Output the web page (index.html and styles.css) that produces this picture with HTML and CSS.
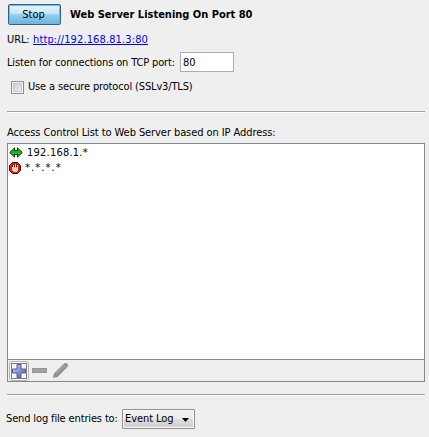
FILE: index.html
```html
<!DOCTYPE html>
<html lang="en">
<head>
<meta charset="utf-8">
<title>Web Server</title>
<link rel="stylesheet" href="styles.css">
</head>
<body>
<main class="panel">
  <header class="row header"><button class="stop">Stop</button><h1 class="title">Web Server Listening On Port 80</h1></header>
  <div class="row url"><span class="url-label">URL:</span><a class="link" href="#">http://192.168.81.3:80</a></div>
  <div class="row port"><label class="port-label" for="port">Listen for connections on TCP port:</label><input class="field" id="port" value="80"></div>
  <div class="row secure"><span class="check"></span><span class="secure-label">Use a secure protocol (SSLv3/TLS)</span></div>
  <hr class="rule">
  <div class="row acl-label"><span>Access Control List to Web Server based on IP Address:</span></div>
  <section class="list">
    <ul class="items">
      <li class="item"><svg class="icon" width="14" height="11" viewBox="0 0 14 11"><path d="M.7 5.500 5.500.9v2.600h3V.9L13.300 5.500 8.500 10.100V7.500h-3v2.600Z" fill="#08c010" stroke="#000" stroke-width=".8"/></svg><span class="allow">192.168.1.*</span></li>
      <li class="item"><svg class="icon" width="12" height="12" viewBox="0 0 12 12"><path d="M3.500.5h5l3 3v5l-3 3h-5l-3-3v-5Z" fill="#f01414" stroke="#300"/><path d="M3 5h6v3L8 10H5L3 8Z" fill="#ffdcb4"/><path d="M4.500 3v3M6.500 2v4M8.500 3v3" stroke="#ffdcb4"/><path d="M3.500 3v2M5.500 2.500v3M7.500 2.500v3" stroke="#5a0808" stroke-width=".7"/></svg><span class="deny">*.*.*.*</span></li>
    </ul>
    <footer class="tools">
      <span class="tool active"><svg width="16" height="16" viewBox="0 0 16 16"><defs><linearGradient id="plus" x2="1" y2="1"><stop stop-color="#c5d0f0"/><stop offset="1" stop-color="#485da5"/></linearGradient></defs><rect x=".5" y=".5" width="15" height="15" fill="none" stroke="#000" stroke-dasharray="1 1"/><path d="M6 1.500h4V6h4.500v4H10v4.500H6V10H1.500V6H6Z" fill="url(#plus)" stroke="#4c5e9b"/></svg></span>
      <svg class="minus" width="15" height="5" viewBox="0 0 15 5"><rect x=".5" y=".5" width="14" height="4" fill="#a1a1a1" stroke="#959595"/></svg>
      <svg class="pencil" width="15" height="15" viewBox="0 0 15 15"><path d="M0 15 1 10.500 10 1.500 12 0h1.500L15 1.500V3L13.500 5 4.500 14Z" fill="#909090"/><path d="m3 11 8-8" stroke="#aaa" stroke-width="1.300"/><path d="m10 1.500 3.500 3.500" stroke="#b5b5b5"/></svg>
    </footer>
  </section>
  <hr class="rule lower">
  <div class="row log"><span class="log-label">Send log file entries to:</span><button class="combo"><span class="combo-text">Event Log</span><svg class="arrow" width="7" height="4" viewBox="0 0 7 4"><path d="M0 0h7L3.500 4Z"/></svg></button></div>
</main>
</body>
</html>
```
FILE: styles.css
```css
* { box-sizing: border-box; }
body { margin: 0; background: #efefef; color: #000; font: 11px/14px "DejaVu Sans Condensed", "DejaVu Sans", sans-serif; font-stretch: condensed; overflow: hidden; white-space: nowrap; }
.panel { width: 429px; height: 437px; padding: 4px 4px 0 7px; display: flex; flex-direction: column; }
.row { display: flex; align-items: center; flex: none; }
button, input { font: inherit; color: inherit; margin: 0; }
.header { height: 21px; gap: 9px; padding-left: 1px; }
.stop { width: 53px; height: 21px; padding: 0 2px 0 0; border: 1px solid #2c628b; border-radius: 2px; background: linear-gradient(#e5f4fc, #c4e5f6 49%, #98d1ef 50%, #68b3db); box-shadow: inset 0 0 0 1px #79b7d8; }
.title { margin: 0; font-size: 11px; font-weight: bold; letter-spacing: -.01px; }
.url { height: 14px; margin-top: 8px; }
.url-label { width: 26px; letter-spacing: -.1px; }
.link { color: #0000ff; letter-spacing: .12px; }
.port { height: 20px; margin-top: 5px; }
.port-label { width: 173px; padding-top: 1px; letter-spacing: -.14px; }
.field { width: 54px; height: 20px; padding: 0 2px; border: 1px solid #abadb3; background: #fff; outline: 0; }
.secure { height: 14px; margin-top: 8px; padding-left: 4px; }
.secure-label { letter-spacing: -.15px; }
.check { width: 13px; height: 13px; margin-right: 4px; border: 1px solid #8e8f8f; background: linear-gradient(135deg, #c5c8cd, #f3f3f3); box-shadow: inset 0 0 0 1px #f4f4f4, inset 0 0 0 2px #c9cccf; }
.rule { flex: none; width: 418px; height: 2px; margin: 17px 0 0; border: 0; border-top: 1px solid #a0a0a0; background: #fff; }
.acl-label { height: 14px; margin-top: 13px; letter-spacing: -.08px; }
.list { width: 418px; height: 239px; margin-top: 3px; border: 1px solid #828790; display: flex; flex-direction: column; }
.items { list-style: none; margin: 0; padding: 1px 0 0 1px; flex: 1; background: #fff; }
.item { display: flex; align-items: center; height: 15px; }
.icon { flex: none; margin-right: 4px; }
.allow { letter-spacing: .22px; }
.deny { letter-spacing: 1.1px; }
.tools { height: 22px; border-top: 1px solid #828790; display: flex; align-items: center; padding-left: 1px; }
.active { width: 20px; height: 20px; border: 1px solid #b5b5b5; border-radius: 3px; background: #f8f8f8; display: grid; place-items: center; }
.minus { margin-left: 3px; }
.pencil { margin-left: 6px; }
.lower { margin-top: 12px; }
.log { height: 21px; margin-top: 12px; }
.log-label { width: 116px; margin-left: -1px; letter-spacing: -.14px; }
.combo { width: 73px; height: 20px; padding: 0 5px 0 2px; border: 1px solid #8e8f8f; border-radius: 1px; box-shadow: inset 0 0 0 1px #fafafa; background: linear-gradient(#f2f2f2, #ebebeb 49%, #ddd 50%, #cfcfcf); display: flex; align-items: center; justify-content: space-between; }
.combo-text { letter-spacing: -.08px; }
.arrow { margin-top: 3px; }
```
